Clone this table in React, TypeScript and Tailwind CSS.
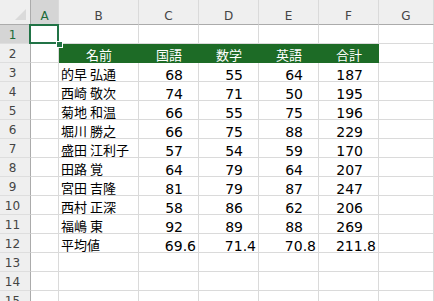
const GREEN = 'bg-[#1d6b26]';

const cols = ['A', 'B', 'C', 'D', 'E', 'F', 'G'];

type Row = { name: string; vals: string[] };

const rows: Row[] = [
  { name: '的早 弘通', vals: ['68', '55', '64', '187'] },
  { name: '西崎 敬次', vals: ['74', '71', '50', '195'] },
  { name: '菊地 和温', vals: ['66', '55', '75', '196'] },
  { name: '堀川 勝之', vals: ['66', '75', '88', '229'] },
  { name: '盛田 江利子', vals: ['57', '54', '59', '170'] },
  { name: '田路 覚', vals: ['64', '79', '64', '207'] },
  { name: '宮田 吉隆', vals: ['81', '79', '87', '247'] },
  { name: '西村 正深', vals: ['58', '86', '62', '206'] },
  { name: '福嶋 東', vals: ['92', '89', '88', '269'] },
  { name: '平均値', vals: ['69.6', '71.4', '70.8', '211.8'] },
];

const headers = ['名前', '国語', '数学', '英語', '合計'];

const cell = 'h-[19px] border-r border-b border-[#dadada] bg-white';
const cjk = "font-['Noto_Sans_CJK_JP',sans-serif] text-[13px]";
const num = "font-['DejaVu_Sans',sans-serif] text-[14px]";

function RowHeader({ n, selected }: { n: number; selected?: boolean }) {
  return (
    <div
      className={`h-[19px] border-r border-b border-r-[#ababab] border-b-[#dedede] pr-[5px] pt-[4px] text-center font-['DejaVu_Sans',sans-serif] text-[12px] leading-[12px] ${
        selected ? 'bg-[#d5d5d5] text-[#1d6b3a]' : 'bg-[#efefef] text-[#444]'
      }`}
    >
      {n}
    </div>
  );
}

export default function App() {
  return (
    <div className="h-[301px] w-[434px] overflow-hidden bg-white">
      <div className="grid grid-cols-[31px_28px_80px_60px_60px_60px_60px_1fr]">
        {/* column headers */}
        <div className="relative h-[25px] border-r border-b border-r-[#ababab] border-b-[#ababab] bg-[#efefef]">
          <svg className="absolute right-[4px] bottom-[4px]" width="11" height="11" viewBox="0 0 11 11">
            <polygon points="11,0 11,11 0,11" fill="#dadada" />
          </svg>
        </div>
        {cols.map((c) => (
          <div
            key={c}
            className={`h-[25px] border-r border-b border-r-[#dadada] border-b-[#ababab] pt-[10px] text-center font-['DejaVu_Sans',sans-serif] text-[12px] leading-[12px] ${
              c === 'A' ? 'bg-[#d5d5d5] text-[#1d6b3a]' : 'bg-[#efefef] text-[#444]'
            }`}
          >
            {c}
          </div>
        ))}

        {/* row 1 */}
        <RowHeader n={1} selected />
        <div className={`${cell} relative`}>
          <div className="pointer-events-none absolute -top-[1px] -right-[1px] -bottom-[1px] -left-[2px] z-10 border-2 border-[#217346]">
            <div className="absolute top-[15px] left-[25px] h-[7px] w-[7px] border border-white bg-[#217346]" />
          </div>
        </div>
        {[0, 1, 2, 3, 4, 5].map((i) => (
          <div key={i} className={cell} />
        ))}

        {/* row 2 */}
        <RowHeader n={2} />
        <div className={cell} />
        {headers.map((h) => (
          <div
            key={h}
            className={`h-[19px] border-b border-[#1d6b26] ${GREEN} pt-[4px] text-center leading-[14px] text-white ${cjk}`}
          >
            {h}
          </div>
        ))}
        <div className={cell} />

        {/* data rows */}
        {rows.map((r, ri) => (
          <Row key={ri} n={ri + 3} row={r} />
        ))}

        {/* empty rows */}
        {[13, 14, 15].map((n) => (
          <EmptyRow key={n} n={n} />
        ))}
      </div>
    </div>
  );
}

function Row({ n, row }: { n: number; row: Row }) {
  return (
    <>
      <RowHeader n={n} />
      <div className={cell} />
      <div className={`${cell} whitespace-nowrap pt-[4px] pl-[2px] leading-[14px] text-black ${cjk}`}>
        {row.name}
      </div>
      {row.vals.map((v, i) => (
        <div
          key={i}
          className={`${cell} pt-[5px] text-right leading-[14px] text-black ${num} ${
            v.includes('.') ? 'pr-[2px]' : 'pr-[15px]'
          }`}
        >
          {v}
        </div>
      ))}
      <div className={cell} />
    </>
  );
}

function EmptyRow({ n }: { n: number }) {
  return (
    <>
      <RowHeader n={n} />
      {cols.map((c) => (
        <div key={c} className={cell} />
      ))}
    </>
  );
}
